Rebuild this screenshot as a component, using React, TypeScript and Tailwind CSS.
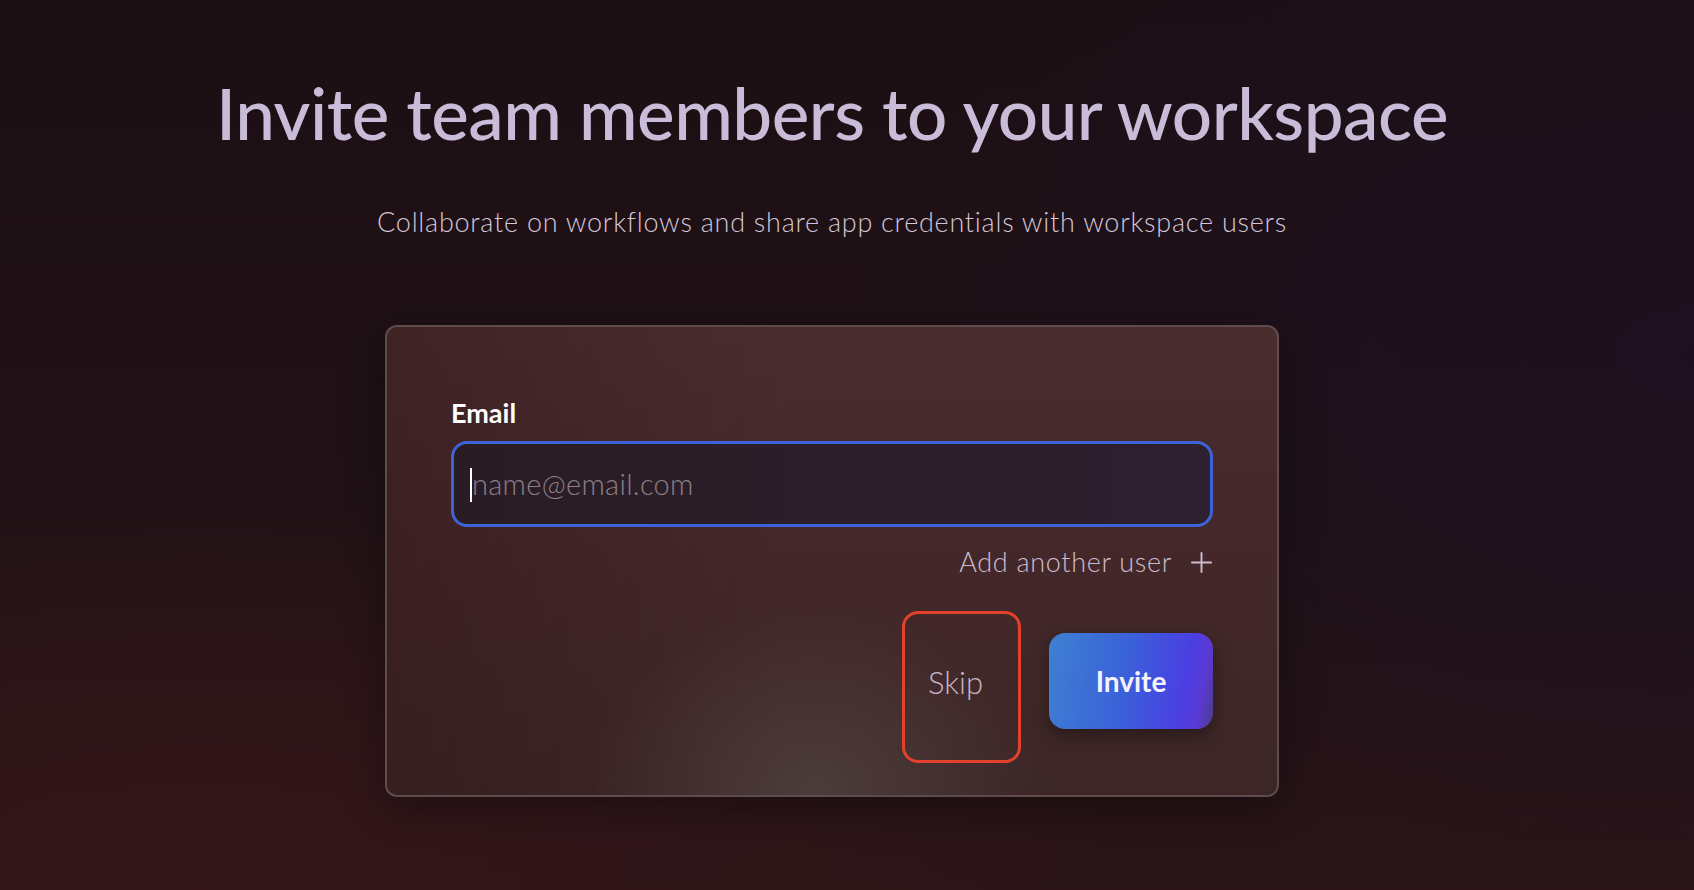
import { useState } from "react";

export default function App() {
  const [email, setEmail] = useState("");

  return (
    <div
      className="min-h-[890px] w-full bg-[#1d1015] bg-[radial-gradient(ellipse_55%_45%_at_12%_100%,#341619_0%,rgba(52,22,25,0)_100%),radial-gradient(ellipse_50%_60%_at_100%_40%,#1d1120_0%,rgba(29,17,32,0)_100%),linear-gradient(180deg,#1c0f14_0%,#211216_60%,#2a1417_100%)] pr-[30px]"
      style={{ fontFamily: "Lato, 'Open Sans', sans-serif" }}
    >
      <main className="flex flex-col items-center pt-[70px]">
        <h1 className="text-[71px] leading-[1.2] font-medium tracking-[-0.5px] text-[#c9bcd8]">
          Invite team members to your workspace
        </h1>
        <p className="mt-[51px] text-[27px] leading-[1.2] font-light tracking-[0.75px] text-[#d4c6d8]">
          Collaborate on workflows and share app credentials with workspace users
        </p>

        <section className="mt-[86px] w-[894px] rounded-[12px] border-2 border-[#5e4b4c] bg-[radial-gradient(ellipse_26%_40%_at_48%_100%,rgba(92,82,80,0.5)_0%,rgba(92,82,80,0)_100%),linear-gradient(90deg,rgba(40,12,14,0.3)_0%,rgba(40,12,14,0)_45%),linear-gradient(180deg,#4a2d2f_0%,#442829_50%,#3c2626_100%)] px-[64px] pt-[70px] pb-[32px] shadow-[0_10px_40px_rgba(0,0,0,0.35)]">
          <label className="block text-[27px] leading-[1.2] font-bold text-white">Email</label>
          <div className="relative mt-[12px]">
            <input
              type="email"
              value={email}
              onChange={(e) => setEmail(e.target.value)}
              placeholder="name@email.com"
              className="h-[86px] w-full rounded-[16px] border-[3px] border-[#3c64d8] bg-[linear-gradient(90deg,#2a1c24_0%,#2c1f2a_60%,#2d2030_100%)] pl-[18px] text-[29px] font-light tracking-[0.3px] text-white placeholder:text-[#8b8088] outline-none caret-transparent"
            />
            <span className="pointer-events-none absolute left-[19px] top-[27px] h-[34px] w-[2px] bg-white" />
          </div>

          <div className="mt-[19px] flex justify-end">
            <button className="flex items-center gap-[18px] text-[27px] leading-[1.2] font-light tracking-[0.7px] text-[#cbbdd0]">
              Add another user
              <svg width="23" height="23" viewBox="0 0 24 24" fill="none" stroke="currentColor" strokeWidth="2" strokeLinecap="round">
                <path d="M12 2v20M2 12h20" />
              </svg>
            </button>
          </div>

          <div className="mt-[33px] flex items-start justify-end gap-[28px]">
            <button className="flex h-[152px] w-[119px] items-center rounded-[16px] border-[3px] border-[#e2422b] pb-[10px] pl-[23px] text-[31px] font-light text-[#c8b6c9]">
              Skip
            </button>
            <button className="mt-[22px] flex h-[96px] w-[164px] items-center justify-center rounded-[16px] bg-[linear-gradient(100deg,#3f80d2_0%,#3a62d9_45%,#4a3fe2_80%,#5a3ad6_90%,#4b3d86_100%)] text-[28px] font-bold text-[#f5f2ff] shadow-[0_6px_18px_rgba(0,0,0,0.35)]">
              Invite
            </button>
          </div>
        </section>
      </main>
    </div>
  );
}
